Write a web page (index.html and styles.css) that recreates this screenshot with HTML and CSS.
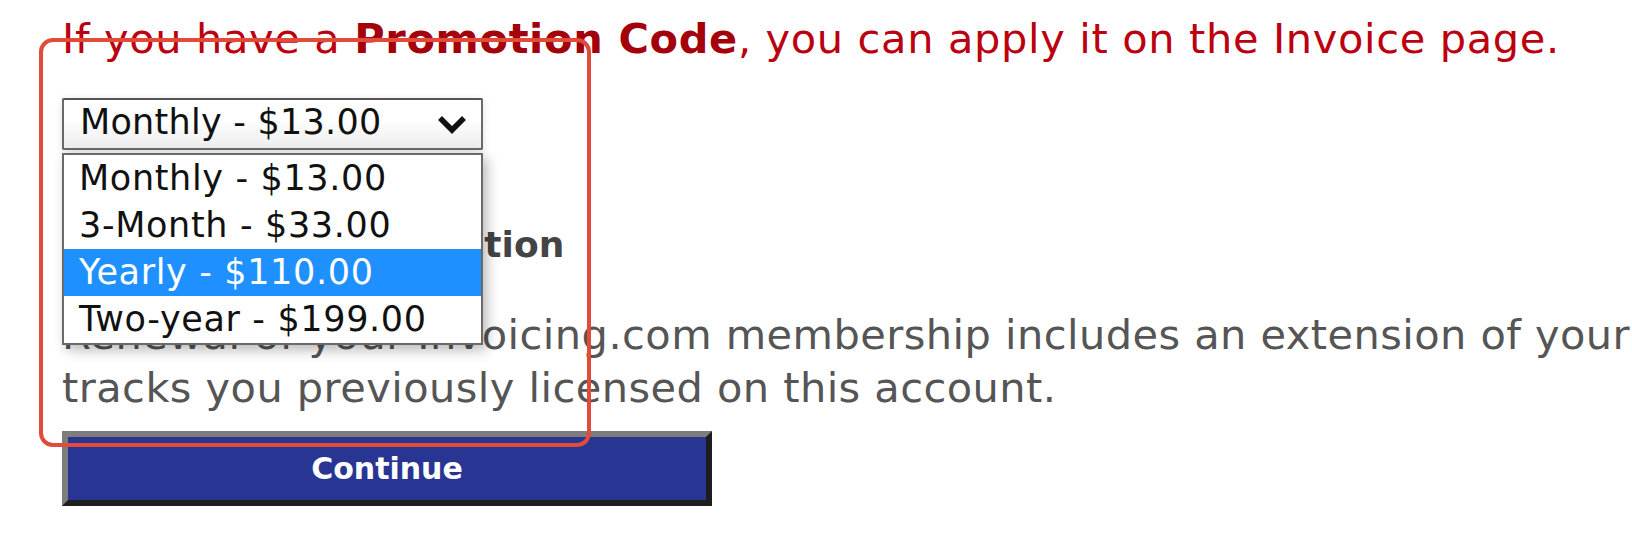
FILE: index.html
```html
<!DOCTYPE html>
<html lang="en">
<head>
<meta charset="utf-8">
<title>Renewal</title>
<link rel="stylesheet" href="styles.css">
</head>
<body>
<div class="page">
  <p class="promo">If you have a <b>Promotion Code</b>, you can apply it on the Invoice page.</p>
  <div class="plan">
    <div class="select">
      <span class="select-value">Monthly - $13.00</span>
      <svg class="chevron" width="30" height="19" viewBox="0 0 30 19"><polyline points="3,3 15,15 27,3" fill="none" stroke="#111" stroke-width="5.5"/></svg>
    </div>
    <ul class="listbox">
      <li class="option">Monthly - $13.00</li>
      <li class="option">3-Month - $33.00</li>
      <li class="option selected">Yearly - $110.00</li>
      <li class="option">Two-year - $199.00</li>
    </ul>
  </div>
  <h3 class="heading">Membership Information</h3>
  <p class="renew">Renewal of your Invoicing.com membership includes an extension of your membership for all<br>tracks you previously licensed on this account.</p>
  <button class="continue" type="button">Continue</button>
</div>
<div class="annotation"></div>
</body>
</html>
```
FILE: styles.css
```css
html, body {
  margin: 0;
  padding: 0;
  background: #fff;
}
body {
  width: 1632px;
  height: 542px;
  overflow: hidden;
  position: relative;
  font-family: "DejaVu Sans", Verdana, sans-serif;
}
.page {
  padding-left: 62px;
  width: 1570px;
  overflow: hidden;
}
.promo {
  margin: 12px 0 0;
  font-size: 41.5px;
  letter-spacing: 0.65px;
  line-height: 53px;
  color: #bb0010;
  white-space: nowrap;
}
.promo b {
  color: #a3000c;
}
.plan {
  position: relative;
  margin-top: 33px;
  width: 421px;
  height: 52px;
  z-index: 2;
}
.select {
  box-sizing: border-box;
  width: 421px;
  height: 52px;
  border: 2px solid #6a6a6a;
  border-top-color: #555;
  border-radius: 2px;
  background: linear-gradient(#ffffff 40%, #ededed);
  display: flex;
  align-items: flex-start;
  justify-content: space-between;
  padding: 0 14px 0 16px;
  box-shadow: 0 2px 8px rgba(0,0,0,0.12);
}
.select-value {
  font-size: 35px;
  letter-spacing: 0.25px;
  line-height: 45px;
  color: #111;
}
.chevron {
  margin-top: 15px;
}
.listbox {
  position: absolute;
  left: 0;
  top: 55px;
  width: 421px;
  box-sizing: border-box;
  margin: 0;
  padding: 0;
  list-style: none;
  background: #fff;
  border: 2px solid #6a6a6a;
  box-shadow: 4px 5px 12px rgba(0,0,0,0.28);
}
.option {
  height: 47px;
  line-height: 47px;
  font-size: 35px;
  letter-spacing: 0.65px;
  padding-left: 15px;
  color: #111;
  white-space: nowrap;
}
.option.selected {
  background: #1e90ff;
  color: #fff;
}
.heading {
  margin: 71px 0 0;
  font-size: 36px;
  line-height: 48px;
  font-weight: bold;
  color: #444;
  white-space: nowrap;
}
.renew {
  margin: 39px 0 0;
  font-size: 41.5px;
  letter-spacing: 0.45px;
  line-height: 53px;
  color: #555;
  white-space: nowrap;
}
.continue {
  display: block;
  margin-top: 17px;
  box-sizing: border-box;
  width: 650px;
  height: 75px;
  background: #283593;
  border-style: solid;
  border-width: 6px;
  border-color: #7d7d7d #1e1e1e #1e1e1e #7d7d7d;
  color: #fff;
  font-family: "DejaVu Sans", Verdana, sans-serif;
  font-weight: bold;
  font-size: 30px;
  padding: 0;
}
.annotation {
  position: absolute;
  left: 39px;
  top: 38px;
  width: 552px;
  height: 409px;
  box-sizing: border-box;
  border: 4px solid #e04b3a;
  border-radius: 14px;
  z-index: 5;
  pointer-events: none;
}
```
